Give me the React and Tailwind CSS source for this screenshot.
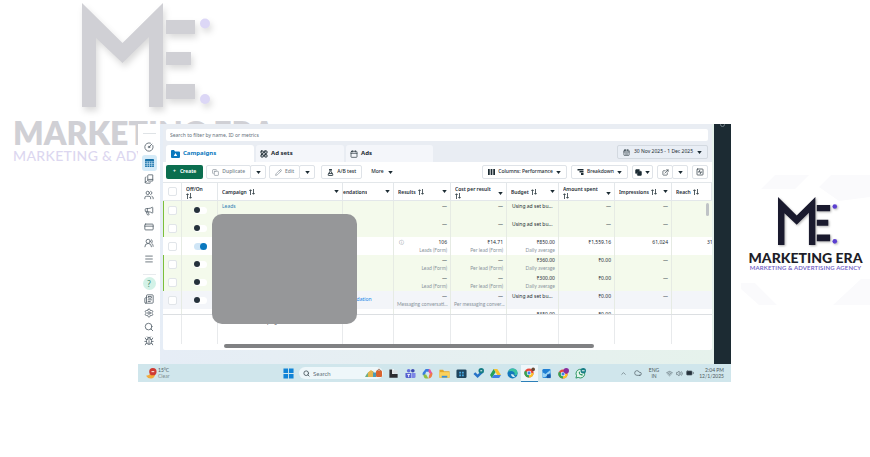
import React from "react";
import {
  BookCopy,
  Bug,
  Calendar,
  CalendarDays,
  ChevronUp,
  CircleGauge,
  Cloud,
  Copy,
  CreditCard,
  ExternalLink,
  FlaskConical,
  LayoutGrid,
  Megaphone,
  Menu,
  Newspaper,
  Pencil,
  Search,
  Settings,
  SquareActivity,
  Volume2,
  Wifi,
  BatteryMedium,
  Users,
  UsersRound,
} from "lucide-react";

const USING = "Using ad set bu...";

const ROWS = [
  { tone: "green", name: "Leads", results: "—", cost: "—", budget: USING, spent: "—", impressions: "—" },
  { tone: "green", results: "—", cost: "—", budget: USING, spent: "—", impressions: "—" },
  { tone: "white", on: true, results: "106", resultsNote: "Leads (Form)", cost: "₹14.71", costNote: "Per lead (Form)", budget: "₹850.00", budgetNote: "Daily average", spent: "₹1,559.16", impressions: "61,024", reach: "31" },
  { tone: "green", results: "—", resultsNote: "Lead (Form)", cost: "—", costNote: "Per lead (Form)", budget: "₹360.00", budgetNote: "Daily average", spent: "₹0.00", impressions: "—" },
  { tone: "green", results: "—", resultsNote: "Lead (Form)", cost: "—", costNote: "Per lead (Form)", budget: "₹300.00", budgetNote: "Daily average", spent: "₹0.00", impressions: "—" },
  { tone: "gray", tip: "Recommendation", results: "—", resultsNote: "Messaging conversati...", cost: "—", costNote: "Per messaging conver...", budget: USING, spent: "₹0.00", impressions: "—" },
  { tone: "white", results: "—", cost: "—", budget: "₹350.00", spent: "₹0.00", impressions: "—" },
];

const TONES = {
  green: "bg-[#f4faec]",
  white: "bg-white",
  gray: "bg-[#f3f5f9]",
};

const NAV = [
  { label: "Overview", icon: CircleGauge },
  { label: "Campaigns", active: true },
  { label: "Reporting", icon: BookCopy },
  { label: "Audiences", icon: Users },
  { label: "Advertising settings", icon: Megaphone },
  { label: "Billing", icon: CreditCard },
  { label: "Events", icon: UsersRound },
  { label: "All tools", icon: Menu },
];

const NAV_BOTTOM = [
  { label: "News", icon: Newspaper },
  { label: "Settings", icon: Settings },
  { label: "Search", icon: Search },
  { label: "Report a bug", icon: Bug },
];

function Monogram({ className, ink, dot }) {
  return (
    <svg viewBox="0 0 130 106" className={className} aria-hidden="true">
      <g fill={ink}>
        <path d="M0 0 40.500 40 81 0V104H67V34L40.500 60 14 35V104H0Z" />
        <path d="M84 17h29v14H84zM84 49h25v13H84zM84 81h29v15H84z" />
      </g>
      <circle cx="123" cy="20.500" r="5" fill={dot} />
      <circle cx="123" cy="96" r="5" fill={dot} />
    </svg>
  );
}

function Caret() {
  return (
    <svg viewBox="0 0 6 4" className="h-[3px] w-[5px] shrink-0" aria-hidden="true">
      <path d="M0 0h6L3 4Z" fill="#1c2b33" />
    </svg>
  );
}

function Sort() {
  return (
    <svg viewBox="0 0 12 12" className="inline-block h-[6px] w-[6px] shrink-0" fill="none" stroke="#1c2b33" strokeWidth="1.500" aria-hidden="true">
      <path d="M3 12V1.500M.5 4 3 1.500 5.500 4M9 0v10.500M6.500 8 9 10.500 11.500 8" />
    </svg>
  );
}

function GridIcon({ className }) {
  return (
    <svg viewBox="0 0 18 16" className={className} aria-hidden="true">
      <rect width="18" height="16" rx="1.500" fill="#1671a8" />
      <path d="M0 5.500h18M0 9h18M0 12.500h18M4.500 5v11M9 5v11M13.500 5v11" stroke="#d5ebf8" strokeWidth="1.200" />
    </svg>
  );
}

function FolderIcon() {
  return (
    <svg viewBox="0 0 18 16" className="h-2 w-[9px]" aria-hidden="true">
      <path d="M0 2q0-2 2-2h4l2 3h8q2 0 2 2v9q0 2-2 2H2q-2 0-2-2Z" fill="#0a78be" />
      <path d="m9 6 3.500 6h-7z" fill="#fff" />
    </svg>
  );
}

function ToolButton({ children, muted, label, narrow }) {
  return (
    <button
      aria-label={label}
      className={
        "flex h-[14px] items-center justify-center gap-[3px] rounded-[2px] border border-[#dfe3e8] bg-white font-medium whitespace-nowrap " +
        (narrow ? "w-4 " : label ? "px-[2px] " : "px-[5px] ") +
        (muted ? "text-[#75808a]" : "text-[#1c2b33]")
      }
    >
      {children}
    </button>
  );
}

function HeaderCell({ title, wrap, caret = true, clipped }) {
  return (
    <th scope="col" className="h-[18px] border-r border-b border-[#e3e7ea] p-0 text-left align-middle font-semibold">
      <div className={"flex items-center justify-between pr-[3px] " + (clipped ? "" : "pl-1")}>
        <span className={"overflow-hidden leading-[8px] whitespace-nowrap " + (wrap ? "flex flex-col" : "flex items-center gap-[2px]")}>
          {title}
          {!clipped && <Sort />}
        </span>
        {caret && (
          <span className={wrap ? "pt-1" : ""}>
            <Caret />
          </span>
        )}
      </div>
    </th>
  );
}

function Metric({ value, note, icon }) {
  const left = value === USING;
  return (
    <td className={"overflow-hidden border-r border-[#e6ebe4] px-[3px] py-[1px] align-top leading-[8px] whitespace-nowrap " + (left ? "text-left" : "text-right")}>
      <div className="flex justify-between">
        <span className="pl-[2px] text-[#75808a]">{icon}</span>
        <span className={left ? "grow" : ""}>{value}</span>
      </div>
      {note && <div className="font-[Lato,sans-serif] leading-[8px] text-[#8a949c]">{note}</div>}
    </td>
  );
}

function Columns() {
  return (
    <colgroup>
      <col className="w-[19px]" />
      <col className="w-[36px]" />
      <col />
      <col className="w-[51px]" />
      <col className="w-[57px]" />
      <col className="w-[56px]" />
      <col className="w-[52px]" />
      <col className="w-[56px]" />
      <col className="w-[57px]" />
      <col className="w-[40px]" />
    </colgroup>
  );
}

function CampaignTable() {
  return (
    <div className="relative">
      <div className="h-[132px] overflow-hidden border-b border-[#dcdfe2]">
        <table className="w-full table-fixed border-separate border-spacing-0">
          <Columns />
          <thead>
            <tr>
              <th scope="col" className="border-r border-b border-[#e3e7ea] p-0">
                <input type="checkbox" aria-label="Select all campaigns" className="mx-auto block h-[9px] w-[9px] appearance-none rounded-[2px] border border-[#e1e5e9] bg-white" />
              </th>
              <HeaderCell title="Off/On" wrap caret={false} />
              <HeaderCell title="Campaign" />
              <HeaderCell title="endations" clipped />
              <HeaderCell title="Results" />
              <HeaderCell title="Cost per result" wrap />
              <HeaderCell title="Budget" />
              <HeaderCell title="Amount spent" wrap />
              <HeaderCell title="Impressions" />
              <HeaderCell title="Reach" caret={false} />
            </tr>
          </thead>
          <tbody>
            {ROWS.map((row, i) => (
              <tr key={i} className={"h-[18px] " + TONES[row.tone]}>
                <td className={"border-r border-[#e6ebe4] p-0 " + (row.tone === "green" ? "border-l border-l-[#7cbf3a]" : "")}>
                  <input type="checkbox" aria-label={"Select row " + (i + 1)} className="mx-auto block h-[9px] w-[9px] appearance-none rounded-[2px] border border-[#e1e5e9] bg-white" />
                </td>
                <td className="border-r border-[#e6ebe4] p-0">
                  <input
                    type="checkbox"
                    role="switch"
                    aria-label={"Toggle row " + (i + 1)}
                    defaultChecked={row.on}
                    className="ml-3 flex h-[7px] w-[13px] appearance-none items-center rounded-full bg-white before:block before:h-[6px] before:w-[6px] before:rounded-full before:bg-[#25313b] checked:justify-end checked:bg-[#cfe5f6] checked:before:h-[7px] checked:before:w-[7px] checked:before:bg-[#0a78be]"
                  />
                </td>
                <td className="border-r border-[#e6ebe4] px-1 py-[1px] align-top leading-[8px]">
                  {row.name && <a href="#leads" className="text-[#2f7db5]">{row.name}</a>}
                </td>
                <td className="overflow-hidden border-r border-[#e6ebe4] p-0 whitespace-nowrap">
                  {row.tip && (
                    <a href="#tip" className="float-left -ml-[13px] text-[#1684e8]">{row.tip}</a>
                  )}
                </td>
                <Metric value={row.results} note={row.resultsNote} icon={row.on ? "ⓘ" : null} />
                <Metric value={row.cost} note={row.costNote} />
                <Metric value={row.budget} note={row.budgetNote} />
                <Metric value={row.spent} />
                <Metric value={row.impressions} />
                <td className="overflow-hidden py-[1px] pr-0 pl-[35px] align-top leading-[8px]">{row.reach}</td>
              </tr>
            ))}
          </tbody>
        </table>
      </div>
      <table className="w-full table-fixed border-separate border-spacing-0">
        <Columns />
        <tbody>
          <tr className="h-[29px]">
            <td className="border-r border-[#e8eaec]" />
            <td className="border-r border-[#e8eaec]" />
            <td className="border-r border-[#e8eaec] px-1 py-[3px] align-top leading-[8px] whitespace-nowrap">Results from 8 campaigns</td>
            <td className="border-r border-[#e8eaec]" />
            <td className="border-r border-[#e8eaec]" />
            <td className="border-r border-[#e8eaec]" />
            <td className="border-r border-[#e8eaec]" />
            <td className="border-r border-[#e8eaec]" />
            <td className="border-r border-[#e8eaec]" />
            <td />
          </tr>
        </tbody>
      </table>
      <div className="ml-[61px] h-1 w-[370px] rounded-full bg-[#808183]" />
      <div className="absolute top-5 right-[3px] h-[13px] w-[3px] rounded-full bg-[#bfc3c6]" />
      {/* block that hides the client names */}
      <div className="absolute top-[31px] left-[49px] h-[110px] w-[145px] rounded-[10px] bg-[#969799]" />
    </div>
  );
}

function Sidebar() {
  return (
    <nav className="flex w-[22px] shrink-0 flex-col items-center bg-white text-[#56626b]">
      <div className="mt-[9px] mb-[5px] h-px w-[13px] bg-[#dfe3e6]" />
      {NAV.map(({ label, icon: Icon, active }) => (
        <a key={label} href={"#" + label} aria-label={label} className={"flex h-4 w-[15px] items-center justify-center rounded-[3px] " + (active ? "bg-[#d5ebf8]" : "")}>
          {active ? <GridIcon className="h-2 w-[9px]" /> : <Icon size={10} strokeWidth={2} />}
        </a>
      ))}
      <div className="mt-[7px] h-px w-[13px] bg-[#e8ebee]" />
      <a href="#help" aria-label="Help" className="mt-[2px] mb-[2px] flex h-[13px] w-[13px] items-center justify-center rounded-full bg-[#d3f2e7] text-[8px] text-[#3a8a72]">?</a>
      {NAV_BOTTOM.map(({ label, icon: Icon }) => (
        <a key={label} href={"#" + label} aria-label={label} className="flex h-[14px] items-center">
          <Icon size={10} strokeWidth={2} />
        </a>
      ))}
    </nav>
  );
}

function AdsManager() {
  return (
    <div className="min-w-0 grow bg-linear-to-r from-[#e6edf6] to-[#e6f2ec] pr-[2px] pb-[14px] pl-[3px]">
      <div className="bg-[#e9edf3] pt-[5px] pr-1 pl-[3px]">
        <input aria-label="Search campaigns" placeholder="Search to filter by name, ID or metrics" className="block h-3 w-full rounded-[2px] bg-white px-1 placeholder:text-[#65717a]" />
        <div className="mt-1 flex h-[17px] items-start">
          <div role="tablist" className="flex h-full grow gap-[2px] text-[6px] font-bold">
            <button role="tab" aria-selected="true" className="flex w-[88px] items-center gap-[3px] rounded-t-[3px] bg-white pl-[5px] text-[#0a78be]">
              <FolderIcon />
              Campaigns
            </button>
            <button role="tab" aria-selected="false" className="flex w-[88px] items-center gap-[3px] rounded-t-[3px] bg-[#f4f6fa] pl-[4px]">
              <LayoutGrid size={8} strokeWidth={3} />
              Ad sets
            </button>
            <button role="tab" aria-selected="false" className="flex w-[87px] items-center gap-[3px] rounded-t-[3px] bg-[#f4f6fa] pl-[4px]">
              <Calendar size={8} strokeWidth={2} />
              Ads
            </button>
          </div>
          <button className="flex h-[14px] items-center gap-1 rounded-[2px] border border-[#d3d9e0] bg-[#e9eef5] px-[5px] whitespace-nowrap">
            <CalendarDays size={7} />
            30 Nov 2025 - 1 Dec 2025
            <Caret />
          </button>
        </div>
      </div>
      <div className="rounded-b-[2px] bg-white pb-[2px]">
        <div className="flex h-5 items-center gap-[3px] px-[3px]">
          <button className="flex h-[14px] items-center gap-[4px] rounded-[2px] bg-[#0b6e4f] px-[7px] font-bold text-white">
            <span>+</span>Create
          </button>
          <div className="flex -space-x-px">
            <ToolButton muted><Copy size={7} />Duplicate</ToolButton>
            <ToolButton narrow label="Duplicate options"><Caret /></ToolButton>
          </div>
          <div className="flex -space-x-px">
            <ToolButton muted><Pencil size={7} />Edit</ToolButton>
            <ToolButton narrow label="Edit options"><Caret /></ToolButton>
          </div>
          <div className="ml-[3px]">
            <ToolButton><FlaskConical size={7} strokeWidth={3} />A/B test</ToolButton>
          </div>
          <button className="ml-[6px] flex items-center gap-1 font-medium">More <Caret /></button>
          <div className="ml-auto flex gap-1 pr-[1px]">
            <ToolButton>
              <svg viewBox="0 0 12 10" className="h-[6px] w-[7px]" fill="#1c2b33" aria-hidden="true">
                <path d="M0 0h3v10H0zM4.500 0h3v10h-3zM9 0h3v10H9z" />
              </svg>
              Columns: Performance
              <Caret />
            </ToolButton>
            <ToolButton>
              <svg viewBox="0 0 12 12" className="h-[6px] w-[7px]" fill="#1c2b33" aria-hidden="true">
                <path d="M0 0h12v3H0zM4 4h8v3H4zM7 8h5v4H7z" />
              </svg>
              Breakdown
              <Caret />
            </ToolButton>
            <ToolButton label="Reports">
              <Copy size={7} fill="#1c2b33" />
              <Caret />
            </ToolButton>
            <div className="flex -space-x-px">
              <ToolButton narrow label="Export"><ExternalLink size={7} /></ToolButton>
              <ToolButton narrow label="Export options"><Caret /></ToolButton>
            </div>
            <ToolButton narrow label="Charts"><SquareActivity size={8} /></ToolButton>
          </div>
        </div>
        <div className="border-t border-[#e3e7ea]">
          <CampaignTable />
        </div>
      </div>
    </div>
  );
}

function AppIcon({ name, children }) {
  return (
    <button aria-label={name} className="flex h-4 w-[17px] items-center justify-center">
      <svg viewBox="0 0 24 24" className="h-[11px] w-[11px]" aria-hidden="true">
        {children}
      </svg>
    </button>
  );
}

function Chrome() {
  return (
    <>
      <circle cx="11" cy="13" r="10" fill="#e8483a" />
      <path d="M11 13 2 8A10 10 0 0 0 11 23Z" fill="#33a456" />
      <path d="M11 13h10a10 10 0 0 1-10 10Z" fill="#f9c22e" />
      <circle cx="11" cy="13" r="5" fill="#fff" />
      <circle cx="11" cy="13" r="3.500" fill="#3f7fe8" />
    </>
  );
}

function Taskbar() {
  return (
    <footer className="grid h-[18px] grid-cols-[1fr_auto_1fr] items-center bg-[#d0e6ec] font-[Lato,sans-serif] text-[5px] leading-[6px] text-[#4c5960]">
      <div className="flex items-center gap-[1px] pl-2">
        <svg viewBox="0 0 24 24" className="h-[11px] w-[11px]" aria-hidden="true">
          <path d="M9 6Q12 16 0 17 4 24 12 23 20 21 20 12Z" fill="#f2a93b" />
          <circle cx="15" cy="8" r="8" fill="#cf3b34" />
          <path d="M12 8h6" stroke="#fff" strokeWidth="2" />
        </svg>
        <div>
          <div>15°C</div>
          <div className="text-[#7d8a91]">Clear</div>
        </div>
      </div>
      <div className="flex items-center">
        <AppIcon name="Start">
          <path d="M1 1h10v10H1zM13 1h10v10H13zM1 13h10v10H1zM13 13h10v10H13z" fill="#1183d6" />
        </AppIcon>
        <div className="mx-[2px] flex h-3 w-[84px] items-center gap-[3px] rounded-full bg-[#eef7fa] pl-1">
          <Search size={7} strokeWidth={3} />
          <input aria-label="Search Windows" placeholder="Search" className="w-0 grow text-[6px] placeholder:text-[#65717a]" />
          <svg viewBox="0 0 36 20" className="h-[10px] w-[18px]" aria-hidden="true">
            <path d="M0 18Q6 4 16 6l4 12Z" fill="#6fae86" />
            <path d="M6 18V9l6-5 6 5v9Z" fill="#e5b44c" />
            <rect x="22" y="5" width="12" height="13" rx="2" fill="#d9642f" />
            <path d="M25 6q3-8 6 0" fill="none" stroke="#8c4a2c" strokeWidth="1.500" />
            <rect x="16" y="9" width="6" height="9" fill="#4c9ab5" />
          </svg>
        </div>
        <AppIcon name="Task view">
          <path d="M3 3h10v10H3z" fill="#fff" />
          <path d="M3 3h6v10h12v8H3z" fill="#2c2c30" />
          <path d="M10 5h11v7H10z" fill="#dcdfe2" />
        </AppIcon>
        <AppIcon name="Teams">
          <circle cx="8" cy="6" r="4" fill="#6672dc" />
          <circle cx="17" cy="6" r="4" fill="#3c49b0" />
          <path d="M1 11h12v11H4q-3 0-3-3Z" fill="#5561d0" />
          <path d="M14 11h9v8q0 3-3 3h-6Z" fill="#7d86e6" />
          <path d="M5 14h6M8 14v6" stroke="#fff" strokeWidth="2" />
        </AppIcon>
        <AppIcon name="Copilot">
          <path d="M8 2h7l3 6H9L6 16H2Q0 14 2 10Z" fill="#3a7de0" />
          <path d="M15 2q4 0 5 5l3 5-5 2-4-6Z" fill="#e556a0" />
          <path d="M22 10q2 4-1 9-2 4-7 4l2-9Z" fill="#ef7b45" />
          <path d="M3 14h6l5 9H8q-3 0-4-4Z" fill="#8fc043" />
        </AppIcon>
        <AppIcon name="File Explorer">
          <path d="M1 4h8l2 3h12v14H1Z" fill="#e4a72a" />
          <path d="M1 9h22v12H1Z" fill="#fbd15b" />
          <path d="M6 17h12v4H6Z" fill="#3b8fd6" />
        </AppIcon>
        <AppIcon name="Microsoft Store">
          <rect x="1" y="3" width="22" height="19" rx="3" fill="#20465f" />
          <path d="M7 8h4v4H7zM13 8h4v4h-4zM7 14h4v4H7zM13 14h4v4h-4z" fill="#49a9e2" />
        </AppIcon>
        <AppIcon name="To Do">
          <path d="m1 13 4-4 5 5L20 5l3 4-13 13Z" fill="#2873c7" />
          <circle cx="18" cy="6" r="6" fill="#167d84" />
          <path d="M16 6h4" stroke="#fff" strokeWidth="2" />
        </AppIcon>
        <AppIcon name="Google Drive">
          <path d="M8 2h8l8 13h-8Z" fill="#f8c22f" />
          <path d="M8 2 0 15l4 7 8-13Z" fill="#26a05a" />
          <path d="M8 15h16l-4 7H4Z" fill="#3e7de8" />
        </AppIcon>
        <AppIcon name="Edge">
          <circle cx="12" cy="12" r="11" fill="#1477bd" />
          <path d="M2 9Q5 1 13 1q10 1 10 10 0 6-7 5 3-7-4-9-6-1-10 2Z" fill="#3cc2a2" />
          <path d="M9 13q0 8 10 7-4-2-5-6Z" fill="#d8f0f5" />
        </AppIcon>
        <div className="border-b border-[#2c7fb8] bg-[#eef7fa]">
          <AppIcon name="Chrome">
            <Chrome />
            <circle cx="20" cy="5" r="4" fill="#6b4a35" />
          </AppIcon>
        </div>
        <AppIcon name="Snipping Tool">
          <rect x="3" y="2" width="18" height="20" rx="3" fill="#1f7fd4" />
          <path d="M3 9 10 13 21 4v6L9 20H3Z" fill="#9ad4f5" />
          <path d="M13 14h8v8h-8Z" fill="#1659a8" />
        </AppIcon>
        <AppIcon name="Chrome work profile">
          <Chrome />
          <circle cx="18" cy="6" r="6" fill="#8a2c9c" />
        </AppIcon>
        <AppIcon name="WhatsApp">
          <path d="M2 22 3.500 17A9.500 9.500 0 1 1 7 20.500Z" fill="#e6f6ee" stroke="#218f58" strokeWidth="2" />
          <path d="M8 10q1 6 8 7l1-3-3-1-1 1-3-3 1-1-1-3Z" fill="#218f58" />
          <circle cx="18" cy="6" r="6" fill="#167d84" />
          <path d="M15 6h6" stroke="#fff" strokeWidth="2" />
        </AppIcon>
      </div>
      <div className="flex items-center justify-end gap-[3px] pr-[7px]">
        <ChevronUp size={7} />
        <Cloud size={8} className="mx-1" />
        <div className="mr-1 text-center">
          <div>ENG</div>
          <div>IN</div>
        </div>
        <Wifi size={7} />
        <Volume2 size={7} />
        <BatteryMedium size={8} fill="#25313b" />
        <div className="ml-[2px] text-right">
          <div>2:04 PM</div>
          <div>12/1/2025</div>
        </div>
      </div>
    </footer>
  );
}

export default function App() {
  return (
    <div className="relative min-h-screen overflow-hidden bg-white font-[Lato,sans-serif]">
      <div className="absolute top-[3px] left-[13px] whitespace-nowrap" aria-hidden="true">
        <Monogram className="ml-[69px] h-[106px] w-[130px] drop-shadow-[2px_4px_3px_rgba(0,0,0,0.14)]" ink="#d0d0d5" dot="#dcd7f6" />
        <div className="mt-2 text-[32px] leading-[32px] font-extrabold text-[#d0d0d5]">MARKETING ERA</div>
        <div className="text-[14px] leading-[14px] font-medium tracking-wide text-[#dcd7f0]">MARKETING &amp; ADVERTISING AGENCY</div>
      </div>

      <div className="relative grid grid-cols-[138px_minmax(0,1fr)_139px]">
        <main className="col-start-2 mt-[124px] font-['Noto_Sans',sans-serif] text-[5px] text-[#1c2b33]">
          <div className="flex">
            <Sidebar />
            <AdsManager />
            <div className="flex w-[17px] shrink-0 justify-center overflow-hidden bg-[#1c2b33]">
              <div className="-mt-[2px] h-[5px] w-[5px] rounded-full border border-[#6f7c85]" />
            </div>
          </div>
          <Taskbar />
        </main>

        <aside className="relative mt-[175px] pt-[22px] pl-[10px]">
          <svg viewBox="0 0 129 130" className="absolute top-0 left-[10px] h-[130px] w-[129px]" fill="#fafafc" aria-hidden="true">
            <path d="M20 14 34 0h34L54 14ZM78 12 90 0h39v22L98 26ZM0 108h14l22 22H18L0 114ZM92 130l28-26h9v26Z" />
          </svg>
          <div className="relative flex flex-col items-center whitespace-nowrap">
            <Monogram className="ml-1 h-[49px] w-[60px] drop-shadow-[1px_1px_1px_rgba(0,0,0,0.3)]" ink="#1a1a2e" dot="#5b3fd0" />
            <h1 className="mt-1 text-[14px] leading-[15px] font-black text-[#1d1d28]">MARKETING ERA</h1>
            <p className="text-[6px] leading-[6px] font-semibold tracking-wide text-[#6a58c4]">MARKETING &amp; ADVERTISING AGENCY</p>
          </div>
        </aside>
      </div>
    </div>
  );
}
